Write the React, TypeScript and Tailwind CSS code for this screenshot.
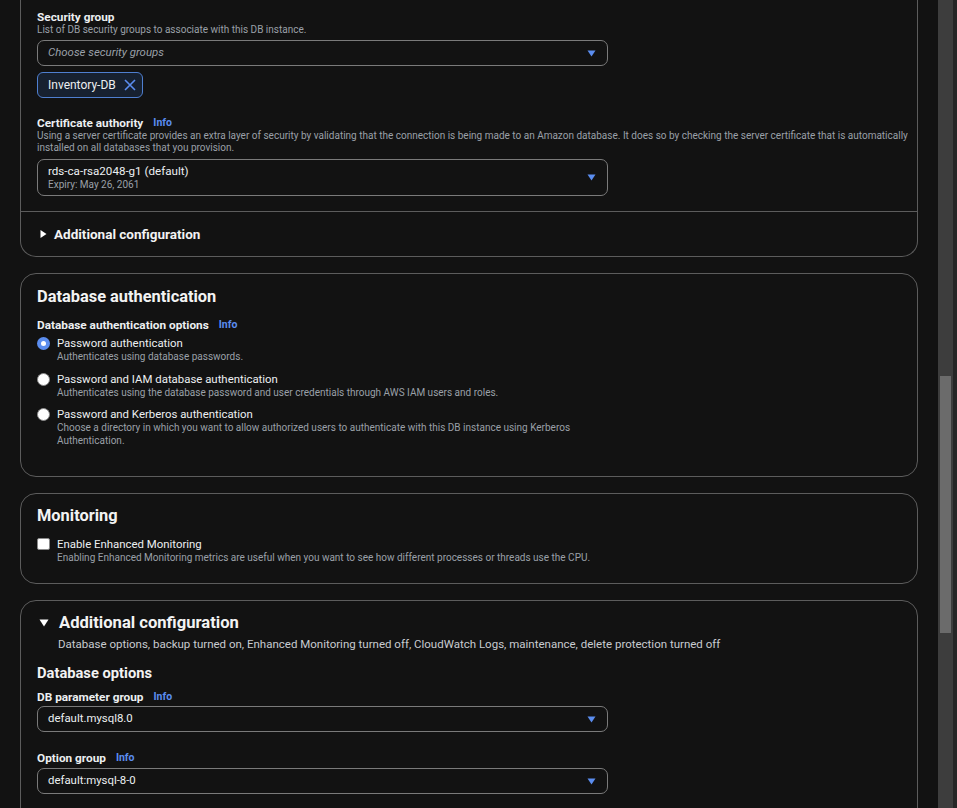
import React from "react";

const Info = () => (
  <span className="ml-[10px] text-[10.5px] font-bold text-[#5b8def]">Info</span>
);

const Caret = () => (
  <svg width="9" height="7" viewBox="0 0 9 7" className="shrink-0">
    <path d="M0.5 0.5 H8.5 L4.5 6.5 Z" fill="#5b8def" />
  </svg>
);

const Select = ({ children, h = "h-[26px]" }: { children: React.ReactNode; h?: string }) => (
  <div
    className={`flex ${h} w-[571px] items-center justify-between rounded-[7px] border border-[#7a7a7a] pl-[10px] pr-[11px]`}
  >
    <div className="flex flex-col">{children}</div>
    <Caret />
  </div>
);

const Label = ({ children, info }: { children: React.ReactNode; info?: boolean }) => (
  <div className="flex items-center text-[11.8px] font-bold leading-[14px] text-[#eceff1]">
    {children}
    {info && <Info />}
  </div>
);

const Desc = ({ children, className = "" }: { children: React.ReactNode; className?: string }) => (
  <div className={`text-[10px] leading-[12px] text-[#9aa0a8] ${className}`}>{children}</div>
);

const Radio = ({ checked }: { checked?: boolean }) =>
  checked ? (
    <span className="mt-[1px] flex h-[13px] w-[13px] shrink-0 items-center justify-center rounded-full bg-[#5b8def]">
      <span className="h-[5px] w-[5px] rounded-full bg-white" />
    </span>
  ) : (
    <span className="mt-[1px] h-[13px] w-[13px] shrink-0 rounded-full border border-[#8a8a8a] bg-white" />
  );

const RadioItem = ({
  checked,
  title,
  desc,
  className = "",
}: {
  checked?: boolean;
  title: string;
  desc: React.ReactNode;
  className?: string;
}) => (
  <div className={`flex gap-[7px] ${className}`}>
    <Radio checked={checked} />
    <div>
      <div className="text-[11.4px] leading-[14px] text-[#eceff1]">{title}</div>
      <Desc className="leading-[13px]">{desc}</Desc>
    </div>
  </div>
);

const Card = ({ children, className = "" }: { children: React.ReactNode; className?: string }) => (
  <div className={`rounded-[16px] border border-[#5c5c5c] ${className}`}>{children}</div>
);

export default function App() {
  return (
    <div
      className="flex h-[808px] w-[957px] overflow-hidden bg-[#121212]"
      style={{ fontFamily: "Roboto, 'Noto Sans', 'Liberation Sans', sans-serif" }}
    >
      <div className="flex flex-1 flex-col gap-[16px] overflow-hidden pl-[20px] pr-[20px]">
        {/* Card 1 (cut at top) */}
        <div className="shrink-0 rounded-b-[16px] border-x border-b border-[#5c5c5c]">
          <div className="px-[16px] pb-[15px] pt-[10px]">
            <Label>Security group</Label>
            <Desc className="leading-[12px]">List of DB security groups to associate with this DB instance.</Desc>
            <div className="mt-[4px]">
              <Select>
                <span className="text-[11.4px] italic text-[#9aa0a8]">Choose security groups</span>
              </Select>
            </div>
            <div className="mt-[6px] flex h-[26px] w-[106px] items-center gap-[8px] rounded-[6px] border border-[#4f7fcf] bg-[#172130] pl-[10px]">
              <span className="text-[12px] text-[#eceff1]">Inventory-DB</span>
              <svg width="12" height="12" viewBox="0 0 12 12">
                <path d="M1 1 L11 11 M11 1 L1 11" stroke="#5b8def" strokeWidth="1.6" />
              </svg>
            </div>
            <div className="mt-[18px]">
              <Label info>Certificate authority</Label>
            </div>
            <Desc className="whitespace-nowrap">
              Using a server certificate provides an extra layer of security by validating that the connection is being
              made to an Amazon database. It does so by checking the server certificate that is automatically
              <br />
              installed on all databases that you provision.
            </Desc>
            <div className="mt-[5px]">
              <Select h="h-[37px]">
                <span className="text-[11.6px] leading-[14px] text-[#eceff1]">rds-ca-rsa2048-g1 (default)</span>
                <span className="text-[10px] leading-[13px] text-[#9aa0a8]">Expiry: May 26, 2061</span>
              </Select>
            </div>
          </div>
          <div className="flex h-[45px] items-center gap-[7px] border-t border-[#5c5c5c] pl-[19px]">
            <svg width="7" height="8" viewBox="0 0 7 8">
              <path d="M0.5 0 L6.5 4 L0.5 8 Z" fill="#ffffff" />
            </svg>
            <span className="text-[13.5px] font-bold text-[#f2f3f3]">Additional configuration</span>
          </div>
        </div>

        {/* Database authentication */}
        <Card className="shrink-0 px-[16px] pb-[29px] pt-[11px]">
          <div className="text-[16.4px] font-bold leading-[24px] text-[#f2f3f3]">Database authentication</div>
          <div className="mt-[9px]">
            <Label info>Database authentication options</Label>
          </div>
          <RadioItem
            checked
            className="mt-[4px]"
            title="Password authentication"
            desc="Authenticates using database passwords."
          />
          <RadioItem
            className="mt-[9px]"
            title="Password and IAM database authentication"
            desc="Authenticates using the database password and user credentials through AWS IAM users and roles."
          />
          <RadioItem
            className="mt-[8px]"
            title="Password and Kerberos authentication"
            desc={
              <>
                Choose a directory in which you want to allow authorized users to authenticate with this DB instance
                using Kerberos
                <br />
                Authentication.
              </>
            }
          />
        </Card>

        {/* Monitoring */}
        <Card className="shrink-0 px-[16px] pb-[19px] pt-[10px]">
          <div className="text-[16.4px] font-bold leading-[24px] text-[#f2f3f3]">Monitoring</div>
          <div className="mt-[9px] flex gap-[7px]">
            <span className="mt-[1px] h-[12px] w-[13px] shrink-0 rounded-[2px] border border-[#8a8a8a] bg-white" />
            <div>
              <div className="text-[11.4px] leading-[14px] text-[#eceff1]">Enable Enhanced Monitoring</div>
              <Desc className="leading-[13px]">
                Enabling Enhanced Monitoring metrics are useful when you want to see how different processes or threads
                use the CPU.
              </Desc>
            </div>
          </div>
        </Card>

        {/* Additional configuration expanded */}
        <Card className="shrink-0 px-[16px] pb-[30px] pt-[10px]">
          <div className="flex items-center gap-[10px]">
            <svg width="10" height="8" viewBox="0 0 10 8" className="ml-[2px]">
              <path d="M0.5 0.5 H9.5 L5 7.5 Z" fill="#ffffff" />
            </svg>
            <span className="text-[16.6px] font-bold leading-[24px] text-[#f2f3f3]">Additional configuration</span>
          </div>
          <div className="mt-[2px] pl-[21px] text-[11.5px] leading-[14px] text-[#c8cbd0]">
            Database options, backup turned on, Enhanced Monitoring turned off, CloudWatch Logs, maintenance, delete
            protection turned off
          </div>
          <div className="mt-[12px] text-[14.7px] font-bold leading-[20px] text-[#f2f3f3]">Database options</div>
          <div className="mt-[7px]">
            <Label info>DB parameter group</Label>
          </div>
          <div className="mt-[2px]">
            <Select>
              <span className="text-[11.4px] text-[#eceff1]">default.mysql8.0</span>
            </Select>
          </div>
          <div className="mt-[19px]">
            <Label info>Option group</Label>
          </div>
          <div className="mt-[3px]">
            <Select>
              <span className="text-[11.4px] text-[#eceff1]">default:mysql-8-0</span>
            </Select>
          </div>
        </Card>
      </div>
      {/* Scrollbar */}
      <div className="flex w-[15px] shrink-0 justify-center bg-[#3d3d3d]">
        <div className="mt-[376px] h-[257px] w-[11px] bg-[#6b6b6b]" />
      </div>
      <div className="w-[4px] shrink-0 bg-[#262626]" />
    </div>
  );
}
